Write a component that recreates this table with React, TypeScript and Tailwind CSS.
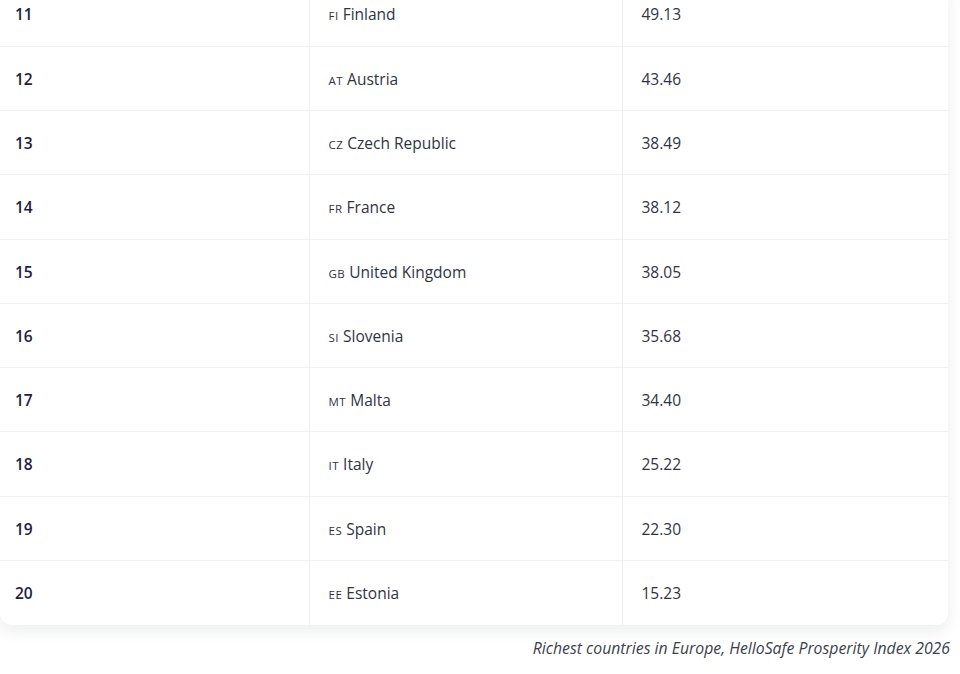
import React from 'react';

const rows = [
  { rank: 11, code: 'FI', country: 'Finland', score: '49.13' },
  { rank: 12, code: 'AT', country: 'Austria', score: '43.46' },
  { rank: 13, code: 'CZ', country: 'Czech Republic', score: '38.49' },
  { rank: 14, code: 'FR', country: 'France', score: '38.12' },
  { rank: 15, code: 'GB', country: 'United Kingdom', score: '38.05' },
  { rank: 16, code: 'SI', country: 'Slovenia', score: '35.68' },
  { rank: 17, code: 'MT', country: 'Malta', score: '34.40' },
  { rank: 18, code: 'IT', country: 'Italy', score: '25.22' },
  { rank: 19, code: 'ES', country: 'Spain', score: '22.30' },
  { rank: 20, code: 'EE', country: 'Estonia', score: '15.23' }
];

export default function App() {
  return (
    <div
      className="w-[960px] h-[674px] overflow-hidden bg-white"
      style={{ fontFamily: '"Open Sans", "Noto Sans", sans-serif' }}
    >
      {/* Table card (scrolled, first row cut off) */}
      <div className="-mt-[18px] mr-[12px] rounded-xl bg-white shadow-[0_6px_16px_rgba(15,23,42,0.08)] overflow-hidden">
        <table className="w-full border-collapse table-fixed">
          <colgroup>
            <col className="w-[309px]" />
            <col className="w-[313px]" />
            <col />
          </colgroup>
          <tbody>
            {rows.map((row, i) => (
              <tr
                key={row.rank}
                className={`h-[64.25px] ${i < rows.length - 1 ? 'border-b border-[#eef0f3]' : ''}`}
              >
                <td className="pl-[15px] pt-[2px] text-[15.5px] font-semibold text-[#1c2140]">{row.rank}</td>
                <td className="pl-[19px] pt-[2px] border-l border-[#eef0f3] text-[15.5px] text-[#2f3444]">
                  <span className="text-[11.5px] tracking-[0.5px] mr-[4px]">{row.code}</span>
                  {row.country}
                </td>
                <td className="pl-[19px] pt-[2px] border-l border-[#eef0f3] text-[15.5px] text-[#2f3444]">{row.score}</td>
              </tr>
            ))}
          </tbody>
        </table>
      </div>

      {/* Caption */}
      <p className="mt-[12px] pr-[10px] text-right text-[15.8px] italic text-[#3a3f4b]">
        Richest countries in Europe, HelloSafe Prosperity Index 2026
      </p>
    </div>
  );
}
